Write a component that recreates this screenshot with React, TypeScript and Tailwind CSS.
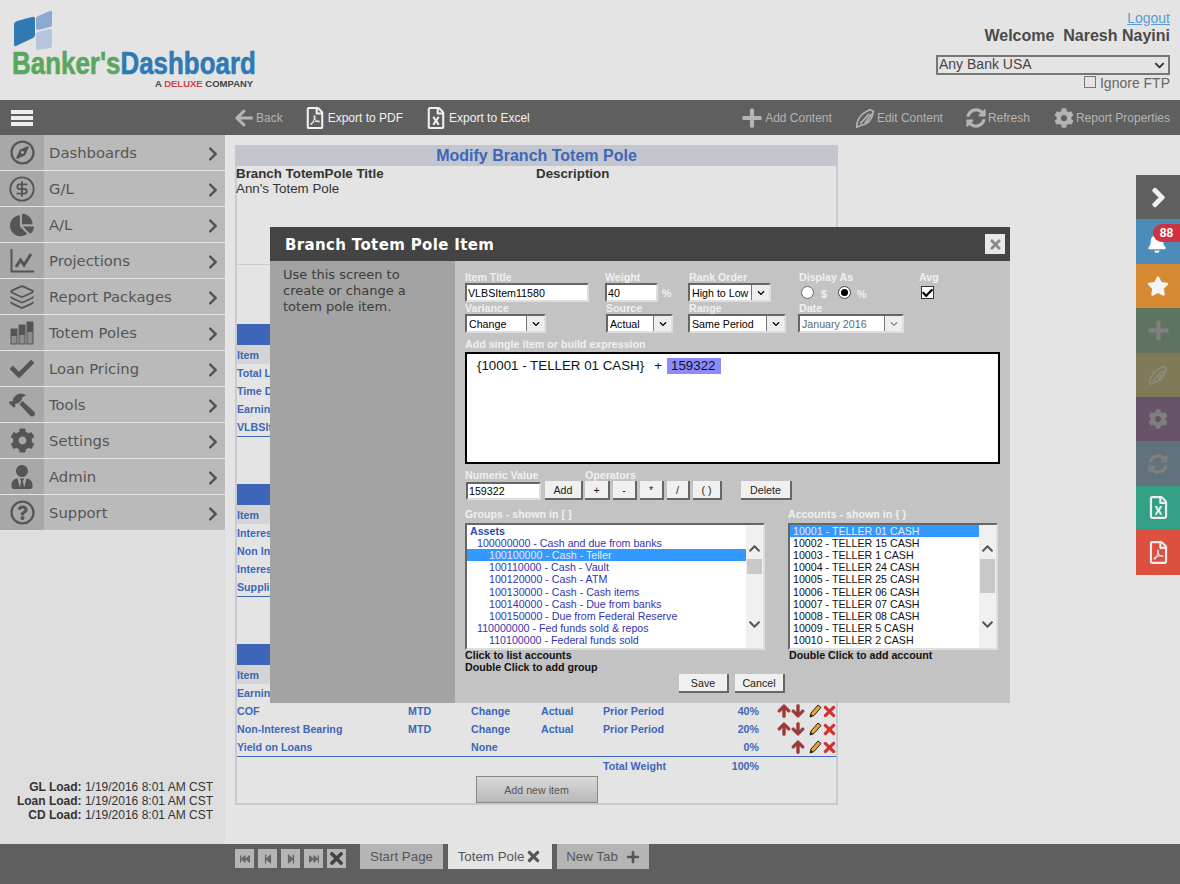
import type { ReactNode } from "react";
import {
  FaArrowDown,
  FaArrowLeft,
  FaArrowUp,
  FaBell,
  FaChartPie,
  FaCheck,
  FaChevronDown,
  FaChevronRight,
  FaChevronUp,
  FaCog,
  FaFastBackward,
  FaFastForward,
  FaHammer,
  FaPlus,
  FaRegCompass,
  FaRegFileExcel,
  FaRegFilePdf,
  FaRegQuestionCircle,
  FaStar,
  FaStepBackward,
  FaStepForward,
  FaSyncAlt,
  FaTimes,
  FaUserTie,
} from "react-icons/fa";
import { CircleDollarSign, Layers } from "lucide-react";

function LineChartIcon() {
  return (
    <svg width="24" height="24" viewBox="0 0 24 24" fill="none" stroke="currentColor">
      <path d="M1.5 0v22.5H24" strokeWidth="2" />
      <path d="M6 18l4.5-7 3.5 5 7-11" strokeWidth="3" />
    </svg>
  );
}

function TotemIcon() {
  return (
    <svg width="24" height="24" viewBox="0 0 24 24">
      <rect x="1" y="8" width="6" height="15" fill="#8c8c8c" stroke="#555" />
      <rect x="1" y="8" width="6" height="7" fill="#555" />
      <rect x="9" y="4" width="6" height="19" fill="#8c8c8c" stroke="#555" />
      <rect x="9" y="4" width="6" height="10" fill="#555" />
      <rect x="17" y="1" width="6" height="22" fill="#8c8c8c" stroke="#555" />
      <rect x="17" y="1" width="6" height="10" fill="#555" />
    </svg>
  );
}

function PenIcon({ size = 20 }: { size?: number }) {
  return (
    <svg width={size} height={size} viewBox="0 0 24 24" fill="none" stroke="currentColor" strokeWidth="2">
      <path d="M2 23c0-8 4-16 16-21l4 2c-1 8-5 15-15 17z" />
      <path d="M6 19L17 7" />
      <path d="M12 18l8-11" />
    </svg>
  );
}

function PencilIcon() {
  return (
    <svg width="13" height="14" viewBox="0 0 13 14">
      <path d="M1 13l1-4 7-8 3 2.500-7 8z" fill="#e5a72f" stroke="#222" strokeWidth="1" />
      <path d="M1 13l1-3 2 2z" fill="#222" />
    </svg>
  );
}

function LogoMark() {
  return (
    <svg width="42" height="40" viewBox="0 0 42 40">
      <path d="M2 15q0-3 3-4l15-4q3-1 3 2v16q0 2-2 3L4 36q-2 1-2-2z" fill="#2f79b5" />
      <path d="M24 9q0-2 2-3l12-5q2-1 2 1v13q0 2-2 2l-12 3q-2 0-2-2z" fill="#8ea9cf" />
      <path d="M24 24q0-2 2-2l12-3q2 0 2 2v14q0 3-2 3l-12 2q-2 0-2-2z" fill="#b4c5dd" />
    </svg>
  );
}

const navItems: { label: string; icon: ReactNode }[] = [
  { label: "Dashboards", icon: <FaRegCompass size={25} /> },
  { label: "G/L", icon: <CircleDollarSign size={28} strokeWidth={1.6} /> },
  { label: "A/L", icon: <FaChartPie size={24} /> },
  { label: "Projections", icon: <LineChartIcon /> },
  { label: "Report Packages", icon: <Layers size={26} strokeWidth={1.6} /> },
  { label: "Totem Poles", icon: <TotemIcon /> },
  { label: "Loan Pricing", icon: <FaCheck size={24} /> },
  { label: "Tools", icon: <FaHammer size={26} className="-scale-x-100" /> },
  { label: "Settings", icon: <FaCog size={25} /> },
  { label: "Admin", icon: <FaUserTie size={24} /> },
  { label: "Support", icon: <FaRegQuestionCircle size={25} /> },
];

const groups = [
  { text: "100000000 - Cash and due from banks", cls: "pl-[10px]" },
  { text: "100100000 - Cash - Teller", cls: "pl-[22px] bg-[#3399ff] text-[#e8e8f8]" },
  { text: "100110000 - Cash - Vault", cls: "pl-[22px]" },
  { text: "100120000 - Cash - ATM", cls: "pl-[22px]" },
  { text: "100130000 - Cash - Cash items", cls: "pl-[22px]" },
  { text: "100140000 - Cash - Due from banks", cls: "pl-[22px]" },
  { text: "100150000 - Due from Federal Reserve", cls: "pl-[22px]" },
  { text: "110000000 - Fed funds sold & repos", cls: "pl-[10px]" },
  { text: "110100000 - Federal funds sold", cls: "pl-[22px]" },
];

const accounts = [
  "10001 - TELLER 01 CASH",
  "10002 - TELLER 15 CASH",
  "10003 - TELLER 1 CASH",
  "10004 - TELLER 24 CASH",
  "10005 - TELLER 25 CASH",
  "10006 - TELLER 06 CASH",
  "10007 - TELLER 07 CASH",
  "10008 - TELLER 08 CASH",
  "10009 - TELLER 5 CASH",
  "10010 - TELLER 2 CASH",
];

function ToolItem({ icon, label, dim }: { icon: ReactNode; label: string; dim?: boolean }) {
  return (
    <div className={`flex items-center gap-[2px] text-[12px] ${dim ? "text-[#b4b4b4]" : "text-[#f2f2f2]"}`}>
      {icon}
      <span>{label}</span>
    </div>
  );
}

function Label({ children }: { children: ReactNode }) {
  return <div className="h-[12px] text-[10.67px] leading-[12px] font-bold text-[#f0f0f0] whitespace-nowrap">{children}</div>;
}

function Sel({ value, width, disabled }: { value: string; width: string; disabled?: boolean }) {
  return (
    <div className={`${width} h-[19px] flex items-center justify-between border-2 border-t-[#666] border-l-[#666] border-r-[#dedede] border-b-[#dedede] bg-white`}>
      <span className={`pl-[2px] text-[10.67px] whitespace-nowrap ${disabled ? "text-[#5a6a6a]" : "text-black"}`}>{value}</span>
      <span className="w-[18px] h-[15px] shrink-0 flex items-center justify-center bg-[#eeeeee] border-l border-[#777]">
        <FaChevronDown size={8} className={disabled ? "text-[#888]" : "text-black"} />
      </span>
    </div>
  );
}

function Btn({ children, width }: { children: ReactNode; width: string }) {
  return (
    <div className={`${width} h-[19px] flex items-center justify-center bg-[#f0f0f0] border-r-2 border-b-2 border-[#666] text-[10.67px] text-[#222]`}>
      {children}
    </div>
  );
}

function ScrollCol({ thumb }: { thumb: string }) {
  return (
    <div className="w-[17px] shrink-0 bg-[#f0f0f0] flex flex-col items-center pt-[17px] text-[#555]">
      <FaChevronUp size={13} />
      <div className={`w-[15px] mt-[4px] bg-[#c8c8c8] ${thumb}`} />
      <div className="flex-1" />
      <FaChevronDown size={13} className="mb-[17px]" />
    </div>
  );
}

function TableRow({
  cells,
  up = true,
  down = true,
}: {
  cells: string[];
  up?: boolean;
  down?: boolean;
}) {
  return (
    <div className="h-[18px] grid grid-cols-[171px_63px_70px_62px_156px_77px] items-center text-[10.67px] font-bold text-[#3d66b8] whitespace-nowrap">
      <span>{cells[0]}</span>
      <span>{cells[1]}</span>
      <span>{cells[2]}</span>
      <span>{cells[3]}</span>
      <span className="grid grid-cols-2">
        <span>{cells[4]}</span>
        <span className="text-right">{cells[5]}</span>
      </span>
      <span className="flex items-center justify-end">
        {up && (
          <span className="w-[14px] flex justify-center">
            <FaArrowUp size={14} stroke="currentColor" strokeWidth={40} className="text-[#9c3a3a]" />
          </span>
        )}
        {down && (
          <span className="w-[14px] flex justify-center">
            <FaArrowDown size={14} stroke="currentColor" strokeWidth={40} className="text-[#9c3a3a]" />
          </span>
        )}
        <span className="ml-[3px] w-[15px] flex justify-center">
          <PencilIcon />
        </span>
        <span className="w-[13px] flex justify-center">
          <FaTimes size={17} className="text-[#cc3333] shrink-0" />
        </span>
      </span>
    </div>
  );
}

function SectionHead() {
  return (
    <>
      <div className="h-[21px] bg-[#3d66b8]" />
      <div className="h-[19px] pt-px flex items-center bg-[#d4d4d4] text-[10.67px] font-bold text-[#3d66b8]">Item</div>
    </>
  );
}

function FragmentRow({ text }: { text: string }) {
  return <div className="h-[18px] flex items-center text-[10.67px] font-bold text-[#3d66b8]">{text}</div>;
}

function Modal() {
  return (
    <div className="absolute left-[270px] top-[227px] w-[740px] h-[476px] flex flex-col z-20">
      {/* Title bar */}
      <div className="h-[34px] shrink-0 bg-[#444444] flex items-center justify-between pl-[15px] pr-[5px]">
        <span className="pt-[2px] font-['DejaVu_Sans',sans-serif] text-[15px] font-bold tracking-[0.35px] text-white">Branch Totem Pole Item</span>
        <span className="w-[20px] h-[20px] flex items-center justify-center bg-[#e8e8e8] text-[#8a8a8a]">
          <FaTimes size={15} />
        </span>
      </div>
      <div className="flex-1 flex">
        {/* Help pane */}
        <div className="w-[185px] bg-[#a3a3a3] pl-[13px] pt-[6px] font-['DejaVu_Sans',sans-serif] text-[13px] leading-[16px] text-[#3c3c3c]">
          Use this screen to
          <br />
          create or change a
          <br />
          totem pole item.
        </div>
        {/* Form */}
        <div className="flex-1 bg-[#c3c3c3] pl-[10px] pt-[10px] pr-[10px] flex flex-col">
          <div className="grid grid-cols-[140px_84px_110px_120px_1fr]">
            <div>
              <Label>Item Title</Label>
              <input
                readOnly
                value="VLBSItem11580"
                className="block w-[124px] h-[19px] bg-white border-2 border-t-[#666] border-l-[#666] border-r-[#dedede] border-b-[#dedede] pl-[1px] text-[10.67px] text-black"
              />
            </div>
            <div>
              <Label>Weight</Label>
              <div className="flex items-center gap-[4px]">
                <input
                  readOnly
                  value="40"
                  className="block w-[53px] h-[19px] bg-white border-2 border-t-[#666] border-l-[#666] border-r-[#dedede] border-b-[#dedede] pl-[1px] text-[10.67px] text-black"
                />
                <span className="text-[10.67px] font-bold text-[#f0f0f0]">%</span>
              </div>
            </div>
            <div className="-ml-[1px]">
              <Label>
                <span className="pl-[1px]">Rank Order</span>
              </Label>
              <Sel value="High to Low" width="w-[83px]" />
            </div>
            <div>
              <Label>Display As</Label>
              <div className="h-[19px] flex items-center pl-[2px] text-[10.67px] font-bold text-[#f0f0f0]">
                <span className="w-[13px] h-[13px] rounded-full bg-white border border-[#666]" />
                <span className="ml-[7px] mt-[3px]">$</span>
                <span className="ml-[11px] w-[13px] h-[13px] rounded-full bg-white border border-[#444] flex items-center justify-center">
                  <span className="w-[7px] h-[7px] rounded-full bg-black" />
                </span>
                <span className="ml-[6px] mt-[3px]">%</span>
              </div>
            </div>
            <div>
              <Label>Avg</Label>
              <div className="h-[19px] pl-[2px] flex items-center">
                <span className="w-[13px] h-[13px] bg-white border border-[#333] flex items-center justify-center">
                  <FaCheck size={12} className="text-black" />
                </span>
              </div>
            </div>
            <div>
              <Label>Variance</Label>
              <Sel value="Change" width="w-[81px]" />
            </div>
            <div>
              <Label>
                <span className="pl-[1px]">Source</span>
              </Label>
              <div className="pl-[1px]">
                <Sel value="Actual" width="w-[67px]" />
              </div>
            </div>
            <div className="-ml-[1px]">
              <Label>
                <span className="pl-[1px]">Range</span>
              </Label>
              <Sel value="Same Period" width="w-[98px]" />
            </div>
            <div className="-ml-[1px]">
              <Label>
                <span className="pl-[1px]">Date</span>
              </Label>
              <Sel value="January 2016" width="w-[106px]" disabled />
            </div>
          </div>

          <div className="mt-[5px]">
            <Label>Add single item or build expression</Label>
          </div>
          <div className="mt-[2px] h-[112px] w-[535px] shrink-0 bg-white border-2 border-black pl-[10px] pt-[4px] text-[13.33px] leading-[16px] text-[#111]">
            {"{10001 - TELLER 01 CASH}"}
            <span className="ml-[10px]">+</span>
            <span className="ml-[5px] inline-block w-[54px] pl-[4px] bg-[#8b8bff]">159322</span>
          </div>

          <div className="mt-[5px] flex">
            <div className="w-[120px]">
              <Label>Numeric Value</Label>
            </div>
            <Label>Operators</Label>
          </div>
          <div className="flex items-center">
            <input
              readOnly
              value="159322"
              className="block ml-[1px] w-[75px] h-[18px] bg-white border-2 border-t-[#666] border-l-[#666] border-r-[#dedede] border-b-[#dedede] pl-[1px] text-[10.67px] text-black"
            />
            <div className="ml-[4px] flex gap-[2px]">
              <Btn width="w-[38px]">Add</Btn>
              <Btn width="w-[25px]">+</Btn>
            </div>
            <div className="ml-[3px] flex gap-[3px]">
              <Btn width="w-[24px]">-</Btn>
              <Btn width="w-[24px]">*</Btn>
              <Btn width="w-[23px]">/</Btn>
              <Btn width="w-[29px]">( )</Btn>
            </div>
            <div className="ml-[19px]">
              <Btn width="w-[51px]">Delete</Btn>
            </div>
          </div>

          <div className="mt-[8px] flex">
            <div className="w-[323px]">
              <Label>Groups - shown in [ ]</Label>
            </div>
            <Label>Accounts - shown in {"{ }"}</Label>
          </div>
          <div className="mt-[3px] flex items-start">
            <div>
              <div className="w-[300px] h-[127px] flex bg-white border-2 border-t-[#666] border-l-[#666] border-r-[#dedede] border-b-[#dedede] overflow-hidden">
                <div className="flex-1 text-[10.67px] leading-[12.2px] text-[#3535b0] whitespace-nowrap -mt-[0.4px]">
                  <div className="pl-[3px] font-bold text-[#2a4bb5]">Assets</div>
                  {groups.map((g) => (
                    <div key={g.text} className={g.cls}>
                      {g.text}
                    </div>
                  ))}
                </div>
                <ScrollCol thumb="h-[15px]" />
              </div>
              <div className="-mt-[1px] text-[10.67px] leading-[12px] font-bold text-[#111]">
                Click to list accounts
                <br />
                Double Click to add group
              </div>
            </div>
            <div className="ml-[23px]">
              <div className="w-[210px] h-[127px] flex bg-white border-2 border-t-[#666] border-l-[#666] border-r-[#dedede] border-b-[#dedede] overflow-hidden">
                <div className="flex-1 text-[10.67px] leading-[12.2px] text-[#111] whitespace-nowrap -mt-[0.4px]">
                  {accounts.map((a, i) => (
                    <div key={a} className={i === 0 ? "pl-[3px] bg-[#3399ff] text-[#e8e8f8]" : "pl-[3px]"}>
                      {a}
                    </div>
                  ))}
                </div>
                <ScrollCol thumb="h-[34px]" />
              </div>
              <div className="-mt-[1px] pl-[1px] text-[10.67px] leading-[12px] font-bold text-[#111]">Double Click to add account</div>
            </div>
          </div>
          <div className="mt-[1px] ml-[214px] flex gap-[6px]">
            <Btn width="w-[50px]">Save</Btn>
            <Btn width="w-[50px]">Cancel</Btn>
          </div>
        </div>
      </div>
    </div>
  );
}

function RightDock() {
  const base = "h-[44.4px] flex items-center justify-center";
  return (
    <div className="absolute right-0 top-[175px] w-[44px] flex flex-col z-30">
      <div className={`${base} bg-[#5f5f5f] text-[#f0f0f0]`}>
        <FaChevronRight size={21} stroke="currentColor" strokeWidth={40} />
      </div>
      <div className={`${base} relative bg-[#4d8cb8] text-white`}>
        <FaBell size={20} className="-ml-[2px] mt-[2px]" />
        <span className="absolute right-0 top-[5px] w-[27px] h-[18px] rounded-l-[9px] bg-[#cf3241] flex items-center justify-center text-[12px] font-bold text-white">88</span>
      </div>
      <div className={`${base} bg-[#d68b33] text-[#f4f4f4]`}>
        <FaStar size={22} />
      </div>
      <div className={`${base} bg-[#5f7361] text-[#7f7f7f]`}>
        <FaPlus size={23} />
      </div>
      <div className={`${base} bg-[#807a58] text-[#8a8a80]`}>
        <PenIcon />
      </div>
      <div className={`${base} bg-[#685468] text-[#7f7f7f]`}>
        <FaCog size={20} />
      </div>
      <div className={`${base} bg-[#61727e] text-[#7f7f7f]`}>
        <FaSyncAlt size={20} />
      </div>
      <div className={`${base} bg-[#33a085] text-[#ececec]`}>
        <FaRegFileExcel size={23} />
      </div>
      <div className={`${base} bg-[#dc5040] text-[#ececec]`}>
        <FaRegFilePdf size={23} />
      </div>
    </div>
  );
}

export default function App() {
  return (
    <div className="relative w-[1180px] h-[884px] flex flex-col overflow-hidden bg-[#e4e4e4] font-['Liberation_Sans',Arial,sans-serif]">
      {/* Header */}
      <header className="h-[100px] shrink-0 flex justify-between pl-[12px] pr-[10px]">
        <div className="pt-[10px] w-[260px]">
          <LogoMark />
          <div className="origin-left scale-x-[0.81] h-[27px] text-[32px] leading-[27px] font-bold whitespace-nowrap [-webkit-text-stroke:0.6px]">
            <span className="text-[#5aa65e]">Banker's</span>
            <span className="text-[#2f79b5]">Dashboard</span>
          </div>
          <div className="mt-[1px] pl-[143px] text-[9.5px] leading-[12px] font-bold text-[#444] whitespace-nowrap">
            A <span className="text-[#d2433f]">DELUXE</span> COMPANY
          </div>
        </div>
        <div className="flex flex-col items-end pt-[10px]">
          <a className="text-[14px] leading-[16px] text-[#5b9bd5] underline">Logout</a>
          <div className="mt-[1px] text-[16px] leading-[18px] font-bold text-[#4a4a4a]">Welcome&nbsp; Naresh Nayini</div>
          <div className="mt-[10px] w-[234px] h-[20px] flex items-center justify-between border-2 border-[#777] pl-[1px] pr-[3px] text-[14px] text-[#444]">
            <span className="-mt-px">Any Bank USA</span>
            <FaChevronDown size={11} className="text-[#333]" />
          </div>
          <div className="flex items-center gap-[4px] text-[14px] leading-[16px] text-[#666]">
            <span className="-mt-[3px] w-[12px] h-[12px] border border-[#777]" />
            <span>Ignore FTP</span>
          </div>
        </div>
      </header>

      {/* Toolbar */}
      <div className="h-[35px] shrink-0 flex items-center bg-[#5f5f5f] pr-[10px]">
        <div className="w-[234px] pl-[11px]">
          <div className="w-[22px] flex flex-col gap-[2px]">
            <div className="h-[4px] bg-[#eeeeee]" />
            <div className="h-[4px] bg-[#eeeeee]" />
            <div className="h-[4px] bg-[#eeeeee]" />
          </div>
        </div>
        <ToolItem dim icon={<FaArrowLeft size={20} />} label="Back" />
        <div className="ml-[21px]">
          <ToolItem icon={<FaRegFilePdf size={22} />} label="Export to PDF" />
        </div>
        <div className="ml-[22px]">
          <ToolItem icon={<FaRegFileExcel size={22} />} label="Export to Excel" />
        </div>
        <div className="ml-auto flex items-center">
          <ToolItem dim icon={<FaPlus size={22} />} label="Add Content" />
          <div className="ml-[23px]">
            <ToolItem dim icon={<PenIcon />} label="Edit Content" />
          </div>
          <div className="ml-[23px]">
            <ToolItem dim icon={<FaSyncAlt size={20} />} label="Refresh" />
          </div>
          <div className="ml-[24px]">
            <ToolItem dim icon={<FaCog size={20} />} label="Report Properties" />
          </div>
        </div>
      </div>

      <div className="flex-1 flex min-h-0">
        {/* Sidebar */}
        <aside className="w-[225px] shrink-0 flex flex-col justify-between bg-[#dedede] pb-[22px]">
          <nav>
            {navItems.map((item) => (
              <div key={item.label} className="h-[36px] flex border-b border-[#e4e4e4] bg-[#bababa]">
                <div className="w-[44px] shrink-0 flex items-center justify-center bg-[#a8a8a8] text-[#555]">{item.icon}</div>
                <div className="flex-1 flex items-center justify-between pl-[5px] pr-[4px] font-['DejaVu_Sans',sans-serif] text-[14.8px] text-[#555]">
                  <span className="pt-[2px]">{item.label}</span>
                  <FaChevronRight size={16} className="mt-[2px]" />
                </div>
              </div>
            ))}
          </nav>
          <div className="pr-[12px] text-right text-[12px] leading-[14px] text-[#333]">
            <div>
              <b>GL Load:</b> 1/19/2016 8:01 AM CST
            </div>
            <div>
              <b>Loan Load:</b> 1/19/2016 8:01 AM CST
            </div>
            <div>
              <b>CD Load:</b> 1/19/2016 8:01 AM CST
            </div>
          </div>
        </aside>

        {/* Report content */}
        <main className="flex-1 pl-[10px] pt-[10px]">
          <div className="w-[603px] h-[660px] border-2 border-t-0 border-[#c9c9d1] flex flex-col">
            <div className="-mx-[2px] h-[21px] shrink-0 bg-[#c3c6ce] text-center text-[16px] leading-[21px] font-bold text-[#3d66b8]">
              Modify Branch Totem Pole
            </div>
            <div className="h-[99px] shrink-0 grid grid-cols-[300px_1fr] border-b border-[#c9c9d1] -ml-[1px] text-[13.33px] leading-[15px] text-[#333]">
              <div>
                <div className="font-bold">Branch TotemPole Title</div>
                <div>Ann's Totem Pole</div>
              </div>
              <div className="font-bold">Description</div>
            </div>

            <div className="mt-[59px]">
              <SectionHead />
              <FragmentRow text="Total L" />
              <FragmentRow text="Time D" />
              <FragmentRow text="Earnin" />
              <FragmentRow text="VLBSItem11580" />
              <div className="h-px bg-[#3d66b8]" />
            </div>

            <div className="mt-[47px]">
              <SectionHead />
              <FragmentRow text="Interes" />
              <FragmentRow text="Non In" />
              <FragmentRow text="Interes" />
              <FragmentRow text="Suppli" />
              <div className="h-px bg-[#3d66b8]" />
            </div>

            <div className="mt-[47px]">
              <SectionHead />
              <FragmentRow text="Earnin" />
              <TableRow cells={["COF", "MTD", "Change", "Actual", "Prior Period", "40%"]} />
              <TableRow cells={["Non-Interest Bearing", "MTD", "Change", "Actual", "Prior Period", "20%"]} />
              <TableRow cells={["Yield on Loans", "", "None", "", "", "0%"]} down={false} />
              <div className="h-px bg-[#3d66b8]" />
              <div className="h-[18px] grid grid-cols-[366px_156px] items-center text-[10.67px] font-bold text-[#3d66b8]">
                <span />
                <span className="grid grid-cols-2">
                  <span className="whitespace-nowrap">Total Weight</span>
                  <span className="text-right">100%</span>
                </span>
              </div>
              <div className="mt-[1px] flex justify-center">
                <div className="w-[122px] h-[27px] flex items-center justify-center border border-[#888] bg-gradient-to-b from-[#dadada] to-[#b9b9b9] text-[10.67px] text-[#555]">
                  Add new item
                </div>
              </div>
            </div>
          </div>
        </main>
      </div>

      {/* Tab bar */}
      <footer className="h-[40px] shrink-0 flex bg-[#5f5f5f] pl-[235px]">
        <div className="flex gap-[4px] pt-[5px] h-[24px]">
          {[
            <FaFastBackward key="first" size={10} />,
            <FaStepBackward key="prev" size={10} />,
            <FaStepForward key="next" size={10} />,
            <FaFastForward key="last" size={10} />,
          ].map((icon) => (
            <span key={icon.key} className="w-[19px] h-[19px] flex items-center justify-center bg-[#b5b5b5] text-[#666]">
              {icon}
            </span>
          ))}
          <span className="w-[19px] h-[19px] flex items-center justify-center bg-[#b5b5b5] text-[#444]">
            <FaTimes size={19} />
          </span>
        </div>
        <div className="ml-[14px] flex gap-[5px] text-[13.33px] text-[#555]">
          <div className="w-[83px] h-[25px] flex items-center justify-center bg-[#b5b5b5]">Start Page</div>
          <div className="w-[104px] h-[25px] flex items-center justify-center gap-[1px] bg-[#e4e4e4]">
            Totem Pole <FaTimes size={17} />
          </div>
          <div className="w-[92px] h-[25px] flex items-center justify-center gap-[8px] bg-[#b5b5b5]">
            New Tab <FaPlus size={14} />
          </div>
        </div>
      </footer>

      <Modal />
      <RightDock />
    </div>
  );
}
